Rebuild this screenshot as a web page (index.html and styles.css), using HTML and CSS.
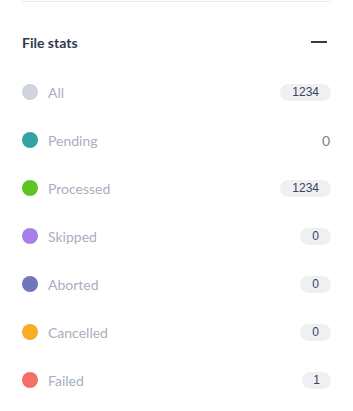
FILE: index.html
```html
<!DOCTYPE html>
<html>
<head>
<meta charset="utf-8">
<link rel="stylesheet" href="styles.css">
</head>
<body>
<div class="panel">
  <div class="header">
    <span class="title">File stats</span>
    <span class="collapse"></span>
  </div>
  <ul class="stats">
    <li class="row"><span class="dot all"></span><span class="label">All</span><span class="badge">1234</span></li>
    <li class="row"><span class="dot pending"></span><span class="label">Pending</span><span class="plain">0</span></li>
    <li class="row"><span class="dot processed"></span><span class="label">Processed</span><span class="badge">1234</span></li>
    <li class="row"><span class="dot skipped"></span><span class="label">Skipped</span><span class="badge">0</span></li>
    <li class="row"><span class="dot aborted"></span><span class="label">Aborted</span><span class="badge">0</span></li>
    <li class="row"><span class="dot cancelled"></span><span class="label">Cancelled</span><span class="badge">0</span></li>
    <li class="row"><span class="dot failed"></span><span class="label">Failed</span><span class="badge narrow">1</span></li>
  </ul>
</div>
</body>
</html>
```
FILE: styles.css
```css
* { box-sizing: border-box; }
html, body { margin: 0; padding: 0; background: #ffffff; }
body { font-family: "Lato", "Noto Sans", sans-serif; }
.panel {
  margin: 1px 22px 0 22px;
  border-top: 1px solid #e9e9ee;
}
.header {
  display: flex;
  align-items: center;
  justify-content: space-between;
  height: 20px;
  margin-top: 30px;
  padding-right: 4px;
}
.title {
  font-size: 14px;
  font-weight: 700;
  color: #2f3a4f;
}
.collapse {
  width: 16px;
  height: 2px;
  background: #2f3a4f;
}
.stats {
  list-style: none;
  margin: 16px 0 0 0;
  padding: 0;
}
.row {
  display: flex;
  align-items: center;
  height: 48px;
}
.dot {
  width: 16px;
  height: 16px;
  border-radius: 50%;
  flex: none;
}
.all { background: #cfd4de; }
.pending { background: #36a3a3; }
.processed { background: #5ec424; }
.skipped { background: #a87fe8; }
.aborted { background: #7077bb; }
.cancelled { background: #f7ad26; }
.failed { background: #f56f68; }
.label {
  margin-left: 10px;
  flex: 1;
  font-size: 14px;
  color: #a9afbe;
}
.badge {
  font-family: "Liberation Sans", Arial, sans-serif;
  font-size: 12px;
  color: #3a4357;
  background: #eef0f4;
  border-radius: 9px;
  height: 17px;
  line-height: 17px;
  padding: 0 12px;
  text-align: center;
}
.badge.narrow { padding: 0 11px; }
.plain {
  font-size: 14px;
  color: #7a8194;
  padding-right: 1px;
}
```
